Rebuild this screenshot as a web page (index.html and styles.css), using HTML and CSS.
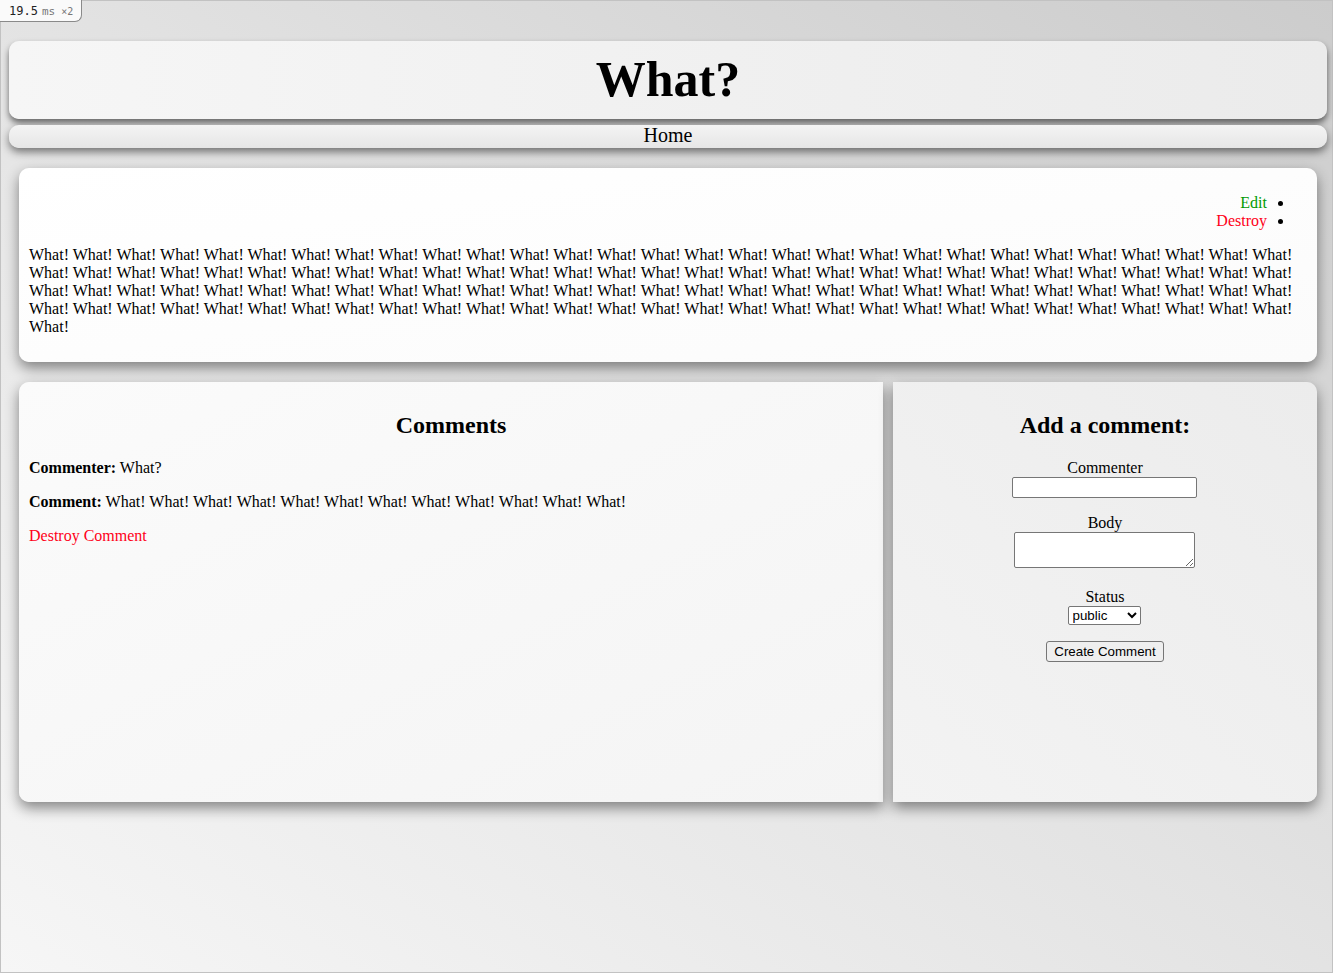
FILE: index.html
```html
<!DOCTYPE html>
<html lang="en">
<head>
<meta charset="utf-8">
<title>What?</title>
<link rel="stylesheet" href="styles.css">
</head>
<body>
<div class="page">
  <div class="badge"><span class="num">19.5</span><span class="unit">ms</span><span class="mult">×2</span></div>
  <header class="site-header"><h1>What?</h1></header>
  <nav class="site-nav"><a href="#" class="nav-link">Home</a></nav>
  <main class="content">
    <section class="panel post">
      <ul class="actions">
        <li><a href="#" class="edit">Edit</a></li>
        <li><a href="#" class="destroy">Destroy</a></li>
      </ul>
      <p class="post-body">What! What! What! What! What! What! What! What! What! What! What! What! What! What! What! What! What! What! What! What! What! What! What! What! What! What! What! What! What! What! What! What! What! What! What! What! What! What! What! What! What! What! What! What! What! What! What! What! What! What! What! What! What! What! What! What! What! What! What! What! What! What! What! What! What! What! What! What! What! What! What! What! What! What! What! What! What! What! What! What! What! What! What! What! What! What! What! What! What! What! What! What! What! What! What! What! What! What! What! What! What! What! What! What! What! What! What! What! What! What! What! What! What! What! What! What! What!</p>
    </section>
    <div class="row">
      <section class="panel comments">
        <h2>Comments</h2>
        <p><strong>Commenter:</strong> What?</p>
        <p><strong>Comment:</strong> What! What! What! What! What! What! What! What! What! What! What! What!</p>
        <p><a href="#" class="destroy">Destroy Comment</a></p>
      </section>
      <section class="panel add">
        <h2>Add a comment:</h2>
        <form class="comment-form">
          <p class="field"><label for="commenter">Commenter</label><br><input type="text" id="commenter" class="text-input"></p>
          <p class="field"><label for="body">Body</label><br><textarea id="body" class="text-area"></textarea></p>
          <p class="field"><label for="status">Status</label><br><select id="status" class="select"><option>public</option><option>private</option><option>archived</option></select></p>
          <p class="field"><button type="button" class="button">Create Comment</button></p>
        </form>
      </section>
    </div>
  </main>
</div>
</body>
</html>
```
FILE: styles.css
```css
html, body {
  margin: 0;
  padding: 0;
}
body {
  font-family: "Liberation Serif", "Times New Roman", serif;
  font-size: 16px;
  color: #000;
}
.page {
  position: relative;
  box-sizing: border-box;
  min-height: 973px;
  border: 1px solid #c2c2c2;
  padding: 40px 5px 0 8px;
  background: linear-gradient(to top right, #f6f6f6 0%, #e3e3e3 50%, #cccccc 100%);
}
.badge {
  position: absolute;
  top: -1px;
  left: -1px;
  box-sizing: border-box;
  width: 82px;
  height: 22px;
  padding: 4px 0 0 9px;
  background: #fafafa;
  border: 1px solid #8a8a8a;
  border-top: none;
  border-left: none;
  border-bottom-right-radius: 7px;
  font-family: "DejaVu Sans Mono", monospace;
  font-size: 12px;
  line-height: 14px;
  white-space: nowrap;
}
.badge .num { color: #222; }
.badge .unit { color: #777; font-size: 11px; margin-left: 4px; }
.badge .mult { color: #777; font-size: 10px; margin-left: 6px; }

.site-header {
  border-radius: 10px;
  background: linear-gradient(to right, #f6f6f6, #ebebeb);
  box-shadow: 0 4px 6px rgba(0, 0, 0, 0.55);
  padding: 10px 0 11px;
  text-align: center;
}
.site-header h1 {
  margin: 0;
  font-size: 50px;
  line-height: 57px;
  font-weight: bold;
}
.site-nav {
  margin-top: 6px;
  box-sizing: border-box;
  height: 23px;
  padding-bottom: 2px;
  border-radius: 10px;
  background: linear-gradient(to bottom, #f4f4f4, #e6e6e6);
  box-shadow: 0 4px 8px rgba(0, 0, 0, 0.5);
  text-align: center;
  font-size: 20px;
  line-height: 21px;
}
.nav-link {
  color: #000;
  text-decoration: none;
}
.content {
  padding: 20px 10px 0;
}
.panel {
  padding: 0 10px;
  border-radius: 10px;
  box-shadow: 0 6px 14px rgba(0, 0, 0, 0.45);
}
.post {
  background: linear-gradient(to bottom right, #ffffff, #fbfbfb);
  padding-top: 10px;
  padding-bottom: 10px;
}
.actions {
  direction: rtl;
  margin: 16px 0;
  padding: 0 40px 0 0;
  list-style: disc;
}
.actions li {
  text-align: right;
}
a { text-decoration: none; }
.edit { color: #009a00; }
.destroy { color: #ff0018; }
.post-body { margin: 16px 0; }

.row {
  display: grid;
  grid-template-columns: 864px 1fr;
  gap: 10px;
  margin-top: 20px;
  height: 420px;
}
.comments {
  border-radius: 10px 0 0 10px;
  background: linear-gradient(to bottom right, #fbfbfb, #f4f4f4);
  padding-top: 10px;
  display: flow-root;
}
.add {
  border-radius: 0 10px 10px 0;
  background: linear-gradient(to bottom left, #ececec, #f3f3f3);
  padding-top: 10px;
  text-align: center;
  display: flow-root;
}
.panel h2 {
  font-size: 24px;
  margin: 20px 0;
  text-align: center;
}
.panel p { margin: 16px 0; }
.comment-form { margin: 0; }
.field { margin: 16px 0; }
.text-input, .text-area, .select {
  margin-right: 2px;
}
.text-input {
  box-sizing: border-box;
  width: 185px;
  height: 21px;
  border: 1px solid #767676;
  border-radius: 2px;
  background: #fff;
  padding: 1px 2px;
  font-family: "Liberation Sans", Arial, sans-serif;
  font-size: 13.33px;
}
.text-area {
  box-sizing: border-box;
  width: 181px;
  height: 36px;
  border: 1px solid #767676;
  border-radius: 2px;
  background: #fff;
  padding: 2px;
  font-family: "Liberation Mono", monospace;
  font-size: 13.33px;
}
.select {
  box-sizing: border-box;
  width: 73px;
  height: 19px;
  border: 1px solid #767676;
  border-radius: 2px;
  background: #fff;
  font-family: "Liberation Sans", Arial, sans-serif;
  font-size: 13.33px;
  color: #000;
}
.button {
  box-sizing: border-box;
  width: 118px;
  height: 21px;
  border: 1px solid #767676;
  border-radius: 3px;
  background: #efefef;
  padding: 1px 6px;
  font-family: "Liberation Sans", Arial, sans-serif;
  font-size: 13.33px;
  color: #000;
}
```
